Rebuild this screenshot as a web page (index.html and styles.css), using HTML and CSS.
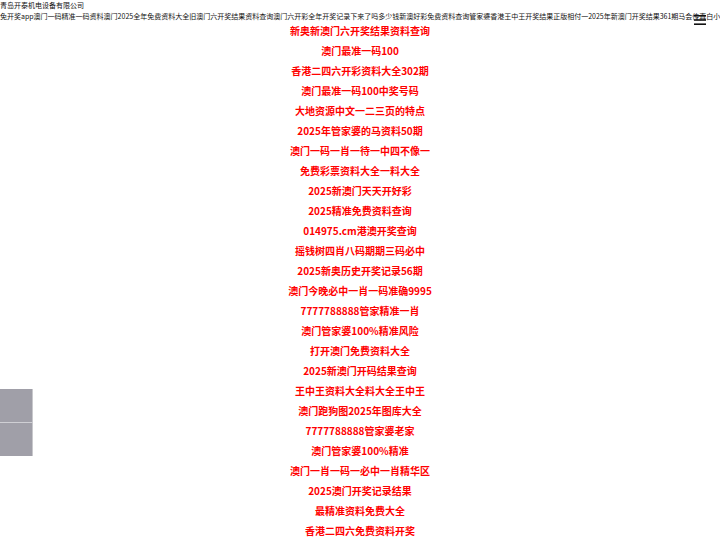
FILE: index.html
```html
<!DOCTYPE html>
<html lang="zh-CN">
<head>
<meta charset="utf-8">
<title>青岛开泰机电设备有限公司</title>
<link rel="stylesheet" href="styles.css">
</head>
<body>
<header class="top">
  <div class="company">青岛开泰机电设备有限公司</div>
  <div class="marquee">免开奖app澳门一码精准一码资料澳门2025全年免费资料大全旧澳门六开奖结果资料查询澳门六开彩全年开奖记录下来了吗多少钱新澳好彩免费资料查询管家婆香港王中王开奖结果正版相付一2025年新澳门开奖结果361期马会传真白小姐</div>
  <button class="menu" aria-label="菜单">
    <svg width="12" height="10" viewBox="0 0 12 10"><rect x="0" y="0" width="12" height="1.6" fill="#111"/><rect x="0" y="4.2" width="12" height="1.6" fill="#111"/><rect x="0" y="8.4" width="12" height="1.6" fill="#111"/></svg>
  </button>
</header>
<ul class="links">
  <li><a href="#">新奥新澳门六开奖结果资料查询</a></li>
  <li><a href="#">澳门最准一码100</a></li>
  <li><a href="#">香港二四六开彩资料大全302期</a></li>
  <li><a href="#">澳门最准一码100中奖号码</a></li>
  <li><a href="#">大地资源中文一二三页的特点</a></li>
  <li><a href="#">2025年管家婆的马资料50期</a></li>
  <li><a href="#">澳门一码一肖一待一中四不像一</a></li>
  <li><a href="#">免费彩票资料大全一料大全</a></li>
  <li><a href="#">2025新澳门天天开好彩</a></li>
  <li><a href="#">2025精准免费资料查询</a></li>
  <li><a href="#">014975.cm港澳开奖查询</a></li>
  <li><a href="#">摇钱树四肖八码期期三码必中</a></li>
  <li><a href="#">2025新奥历史开奖记录56期</a></li>
  <li><a href="#">澳门今晚必中一肖一码准确9995</a></li>
  <li><a href="#">7777788888管家精准一肖</a></li>
  <li><a href="#">澳门管家婆100%精准风险</a></li>
  <li><a href="#">打开澳门免费资料大全</a></li>
  <li><a href="#">2025新澳门开码结果查询</a></li>
  <li><a href="#">王中王资料大全料大全王中王</a></li>
  <li><a href="#">澳门跑狗图2025年图库大全</a></li>
  <li><a href="#">7777788888管家婆老家</a></li>
  <li><a href="#">澳门管家婆100%精准</a></li>
  <li><a href="#">澳门一肖一码一必中一肖精华区</a></li>
  <li><a href="#">2025澳门开奖记录结果</a></li>
  <li><a href="#">最精准资料免费大全</a></li>
  <li><a href="#">香港二四六免费资料开奖</a></li>
</ul>
<div class="float-btns">
  <a class="fbtn" href="#"></a>
  <a class="fbtn" href="#"></a>
</div>
</body>
</html>
```
FILE: styles.css
```css
html, body {
  margin: 0;
  padding: 0;
  background: #fff;
  font-family: "Noto Sans CJK SC", "Liberation Sans", sans-serif;
  overflow: hidden;
}
.top {
  position: relative;
  height: 18px;
  font-size: 7px;
  line-height: 10.5px;
  color: #111;
}
.company, .marquee {
  white-space: nowrap;
  overflow: hidden;
}
.menu {
  position: absolute;
  right: 14px;
  top: 15px;
  padding: 0;
  border: 0;
  background: transparent;
  line-height: 0;
}
.links {
  list-style: none;
  margin: 0;
  padding: 0;
  text-align: center;
}
.links li {
  line-height: 20px;
  height: 20px;
}
.links a {
  color: #f00;
  font-weight: bold;
  font-size: 10px;
  text-decoration: none;
}
.float-btns {
  position: fixed;
  left: 0;
  top: 389px;
  display: flex;
  flex-direction: column;
  width: 33px;
}
.fbtn {
  display: block;
  height: 33px;
  background: #a09fa8;
  border-right: 1px solid #c8c8cc;
}
.fbtn + .fbtn {
  border-top: 1px solid #cfcfd4;
}
```
